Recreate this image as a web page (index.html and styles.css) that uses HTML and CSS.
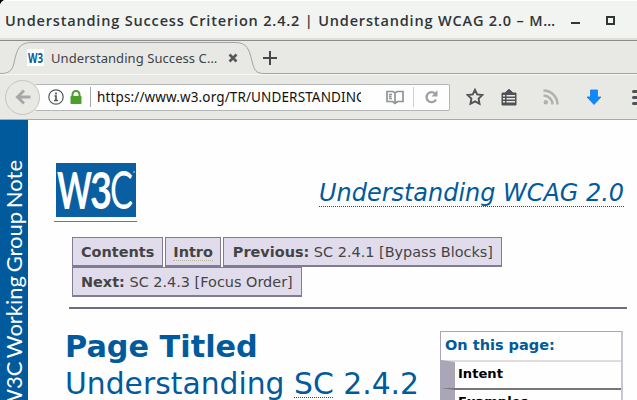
FILE: index.html
```html
<!DOCTYPE html>
<html lang="en">
<head>
<meta charset="utf-8">
<title>Understanding Success Criterion 2.4.2</title>
<link rel="stylesheet" href="styles.css">
</head>
<body>
<div class="window">
  <header class="titlebar">
    <span class="window-title">Understanding Success Criterion 2.4.2 | Understanding WCAG 2.0 – M…</span>
    <span class="minimize"></span>
    <span class="maximize"></span>
  </header>
  <div class="tabs">
    <svg class="tab-shape" width="637" height="33" viewBox="0 0 637 33">
      <path d="M0 32.5C9 32.5 12 30 14 22C17 8 19 1.500 32 1.500H235C247 1.500 249 8 252 20C254 29 256 32.500 264 32.500H637" fill="none" stroke="#a3a4a1"/>
    </svg>
    <div class="tab">
      <svg class="favicon" width="17" height="17" viewBox="0 0 17 17"><rect width="17" height="17" fill="#fff"/><text x="1" y="13.500" textLength="15" lengthAdjust="spacingAndGlyphs">W3</text></svg>
      <span class="tab-label">Understanding Success C…</span>
      <svg class="close" width="10" height="10" viewBox="0 0 10 10"><path d="M1.500 1.500l7 7m0-7l-7 7" stroke="#55585a" stroke-width="2.600"/></svg>
    </div>
    <svg class="plus" width="14" height="14" viewBox="0 0 14 14"><path d="M7 0v14M0 7h14" stroke="#45484a" stroke-width="2"/></svg>
  </div>
  <div class="toolbar">
    <div class="back"><svg width="16" height="16" viewBox="0 0 16 16"><path d="M9 1.500L2.500 8L9 14.500M3 8H15.500" fill="none" stroke="#a7a8a7" stroke-width="3"/></svg></div>
    <div class="address">
      <svg class="info" width="16" height="16" viewBox="0 0 16 16"><circle cx="8" cy="8" r="7.200" fill="none" stroke="#55585a" stroke-width="1.200"/><path d="M8 3.500v2M6.500 7H8v4M6 11.500h4" fill="none" stroke="#55585a" stroke-width="1.700"/></svg>
      <svg class="lock" width="12" height="14" viewBox="0 0 12 14"><path d="M2.500 7V4.500a3.500 3.500 0 0 1 7 0V7" fill="none" stroke="#4d9e2b" stroke-width="2"/><rect x=".5" y="6" width="11" height="8" rx=".7" fill="#4d9e2b"/></svg>
      <span class="rule"></span>
      <span class="url">https://www.w3.org/TR/UNDERSTANDING</span>
      <svg class="reader" width="18" height="15" viewBox="0 0 18 15"><path d="M1 1.500H7L9 3L11 1.500H17V11.500H11.500L9 13.500L6.500 11.500H1ZM9 3V13M3 4.500h3M3 6.500h2.500M3 8.500h3" fill="none" stroke="#919497" stroke-width="1.700"/></svg>
      <span class="rule light"></span>
      <svg class="reload" width="14" height="14" viewBox="0 0 14 14"><path d="M10 3.500A5 5 0 1 0 11 9.500" fill="none" stroke="#a09fa8" stroke-width="2.300"/><path d="M12.500 0V6.500H6.500Z" fill="#a09fa8"/></svg>
    </div>
    <svg class="star" width="18" height="18" viewBox="0 0 18 18"><path d="M9 1.800L11.200 6.400L16.300 7.100L12.600 10.600L13.500 15.800L9 13.300L4.500 15.800L5.400 10.600L1.700 7.100L6.800 6.400Z" fill="none" stroke="#505356" stroke-width="1.900"/></svg>
    <span class="divider"></span>
    <svg class="clipboard" width="16" height="17" viewBox="0 0 16 17"><path d="M1 16h14V4h-3L10 2 8 .3 6 2 4 4H1Z" fill="#505356" stroke="#505356" stroke-linejoin="round"/><path d="M5.500 6.700H14M5.500 9.700H14M5.500 12.700H14M2 6.700h2M2 9.700h2M2 12.700h2" stroke="#e8e9e5" stroke-width="1.600"/></svg>
    <svg class="feed" width="16" height="16" viewBox="0 0 16 16"><circle cx="2.800" cy="13.200" r="2.200" fill="#b0b1af"/><path d="M.5 6.500A9 9 0 0 1 9.500 15.500M.5 1.500A14 14 0 0 1 14.500 15.500" fill="none" stroke="#b0b1af" stroke-width="2.500"/></svg>
    <svg class="download" width="16" height="17" viewBox="0 0 16 17"><path d="M4.500 1h7v7H15L8 15.500L1 8H4.500Z" fill="#0b8bff" stroke="#1878d2" stroke-width=".8"/></svg>
    <span class="menu-rule"></span>
    <span class="menu"><i></i><i></i><i></i></span>
  </div>
  <div class="page">
    <aside class="note"><span>W3C Working Group Note</span></aside>
    <main>
      <div class="masthead">
        <div class="logo"><svg width="80" height="54" viewBox="0 0 80 54"><rect width="80" height="54" fill="#0a5fa2"/><g class="logo-text"><text x="1" y="46" textLength="35" lengthAdjust="spacingAndGlyphs">W</text><text x="34" y="46" textLength="22" lengthAdjust="spacingAndGlyphs">3</text><text class="thin" x="54" y="46" textLength="23" lengthAdjust="spacingAndGlyphs">C</text></g><circle cx="78" cy="9" r="1" fill="#80afd0"/></svg></div>
        <span class="document">Understanding WCAG 2.0</span>
      </div>
      <nav>
        <ul>
          <li><b>Contents</b></li>
          <li class="intro"><b class="abbr">Intro</b></li>
          <li class="previous"><b>Previous:</b> SC 2.4.1 [Bypass Blocks]</li>
          <li><b>Next:</b> SC 2.4.3 [Focus Order]</li>
        </ul>
      </nav>
      <div class="content">
        <h1><b>Page Titled</b><br>Understanding <span>SC</span> 2.4.2</h1>
        <section class="contents">
          <h2>On this page:</h2>
          <div class="entry">Intent</div>
          <div class="entry">Examples</div>
        </section>
      </div>
    </main>
  </div>
</div>
</body>
</html>
```

FILE: styles.css
```css
* { box-sizing: border-box; }
body { margin: 0; background: #000; overflow: hidden; }
svg { display: block; flex: none; }
.window { width: 637px; height: 400px; overflow: hidden; display: flex; flex-direction: column; background: #e8e9e5; border-top-left-radius: 6px; }
.titlebar { flex: none; height: 41px; display: flex; align-items: center; padding-left: 5px; background: #f2f4f1; border-top: 1px solid #fff; border-bottom: 1px solid #8b8c89; box-shadow: inset 0 -2px #dedfdc; }
.window-title { width: 566px; font: 600 14.5px/40px "Open Sans", sans-serif; color: #303538; white-space: nowrap; letter-spacing: .83px; }
.minimize { width: 9px; height: 2px; background: #303538; margin-top: 5px; }
.maximize { width: 9px; height: 9px; border: 2px solid #303538; margin-left: 26px; }
.tabs { flex: none; height: 33px; position: relative; display: flex; align-items: center; padding-left: 27px; }
.tab-shape { position: absolute; left: 0; top: 0; }
.tab { width: 236px; display: flex; align-items: center; }
.favicon { font: bold 14px "Open Sans", sans-serif; fill: #075b9e; }
.tab-label { margin-left: 7px; width: 177px; white-space: nowrap; font: 13px/20px "Noto Sans", sans-serif; letter-spacing: .07px; color: #3e4245; }
.toolbar { flex: none; height: 46px; display: flex; align-items: center; border-top: 1px solid #f7f8f5; border-bottom: 1px solid #a9aaa7; padding-left: 5px; }
.back { width: 35px; height: 35px; border: 1px solid #c5c6c2; border-radius: 50%; background: #e8e9e5; display: flex; align-items: center; justify-content: center; position: relative; z-index: 1; flex: none; }
.address { width: 415px; height: 27px; margin-left: -5px; padding-left: 13px; border: 1px solid #b2b6b5; border-left: 0; border-radius: 2px; display: flex; align-items: center; background: #fefefe; flex: none; }
.lock { margin-left: 6px; }
.rule { width: 1px; height: 20px; background: #a8a9a7; margin-left: 8px; flex: none; }
.url { width: 264px; margin-left: 6px; overflow: hidden; white-space: nowrap; font: 13.5px/24px "Noto Sans", sans-serif; letter-spacing: .13px; color: #111; }
.reader { margin-left: 25px; }
.light { background: #cfd0ce; margin-left: 9px; }
.reload { margin-left: 11px; }
.star { margin-left: 16px; }
.divider { width: 1px; height: 20px; margin-left: 8px; background: #c8c9c6; }
.clipboard { margin-left: 9px; }
.feed { margin-left: 26px; }
.download { margin-left: 27px; }
.menu-rule { width: 1px; height: 38px; margin-left: 15px; background: #cecfcc; }
.menu { margin-left: 15px; display: flex; flex-direction: column; gap: 3px; }
.menu i { width: 14px; height: 3px; border-radius: 2px; background: #505356; }
.page { flex: 1; min-height: 0; display: flex; background: #fefefe; }
.note { width: 28px; flex: none; background: #005a9c; color: #fff; padding-top: 40px; }
.note span { display: block; width: 28px; writing-mode: vertical-rl; transform: rotate(180deg); white-space: nowrap; font: 22px/28px Lato, sans-serif; word-spacing: -2px; }
main { flex: 1; min-width: 0; padding: 43px 0 0 26px; font-family: "DejaVu Sans", sans-serif; }
.masthead { display: flex; height: 59px; justify-content: space-between; padding-right: 13px; }
.logo { width: 83px; height: 59px; border-bottom: 1px solid #77737a; padding-left: 2px; }
.logo-text { font: bold 52px Lato, sans-serif; fill: #fff; }
.thin { font-weight: 400; }
.document { color: #005a9c; font-size: 23.95px; line-height: 30px; font-style: italic; height: 29px; margin-top: 15px; border-bottom: 1px dotted #444; }
nav { margin: 15px 10px 0 15px; border-bottom: 2px solid #716c85; height: 72px; }
ul { margin: 0; padding: 0 0 0 3px; list-style: none; display: flex; flex-wrap: wrap; row-gap: 0; column-gap: 2px; }
li { height: 30px; padding: 0 8px; border: 1px solid #817b94; border-width: 1px 1px 2px 1px; background: #e0dcec; color: #444; font-size: 14.45px; line-height: 28px; white-space: nowrap; }
.intro { padding: 0 7px; }
.previous { padding: 0 8px 0 9px; }
.abbr { display: inline-block; height: 23px; border-bottom: 1px dotted #b8b49f; }
.content { display: flex; justify-content: space-between; padding: 22px 14px 0 11px; }
h1 { margin: -3px 0 0; color: #005a9c; font-size: 29.8px; font-weight: 400; line-height: 37px; white-space: nowrap; }
h1 b { font-size: 30.3px; }
h1 span { background: repeating-linear-gradient(90deg, #005a9c 0 1px, transparent 1px 2px) 0 31px / 100% 1px no-repeat; }
.contents { width: 183px; border: 1px solid #aaa6ba; border-right: 2px solid #c9c5d6; }
h2 { margin: 0; padding-left: 4px; height: 28px; font-size: 14.5px; line-height: 27px; color: #005a9c; }
.entry { height: 28px; border-top: 2px solid #ddd; border-left: 14px solid #aaa6b8; padding-left: 3px; font-weight: bold; font-size: 13.1px; line-height: 24px; color: #000; }
.entry + .entry { border-top-color: #777; }
```
